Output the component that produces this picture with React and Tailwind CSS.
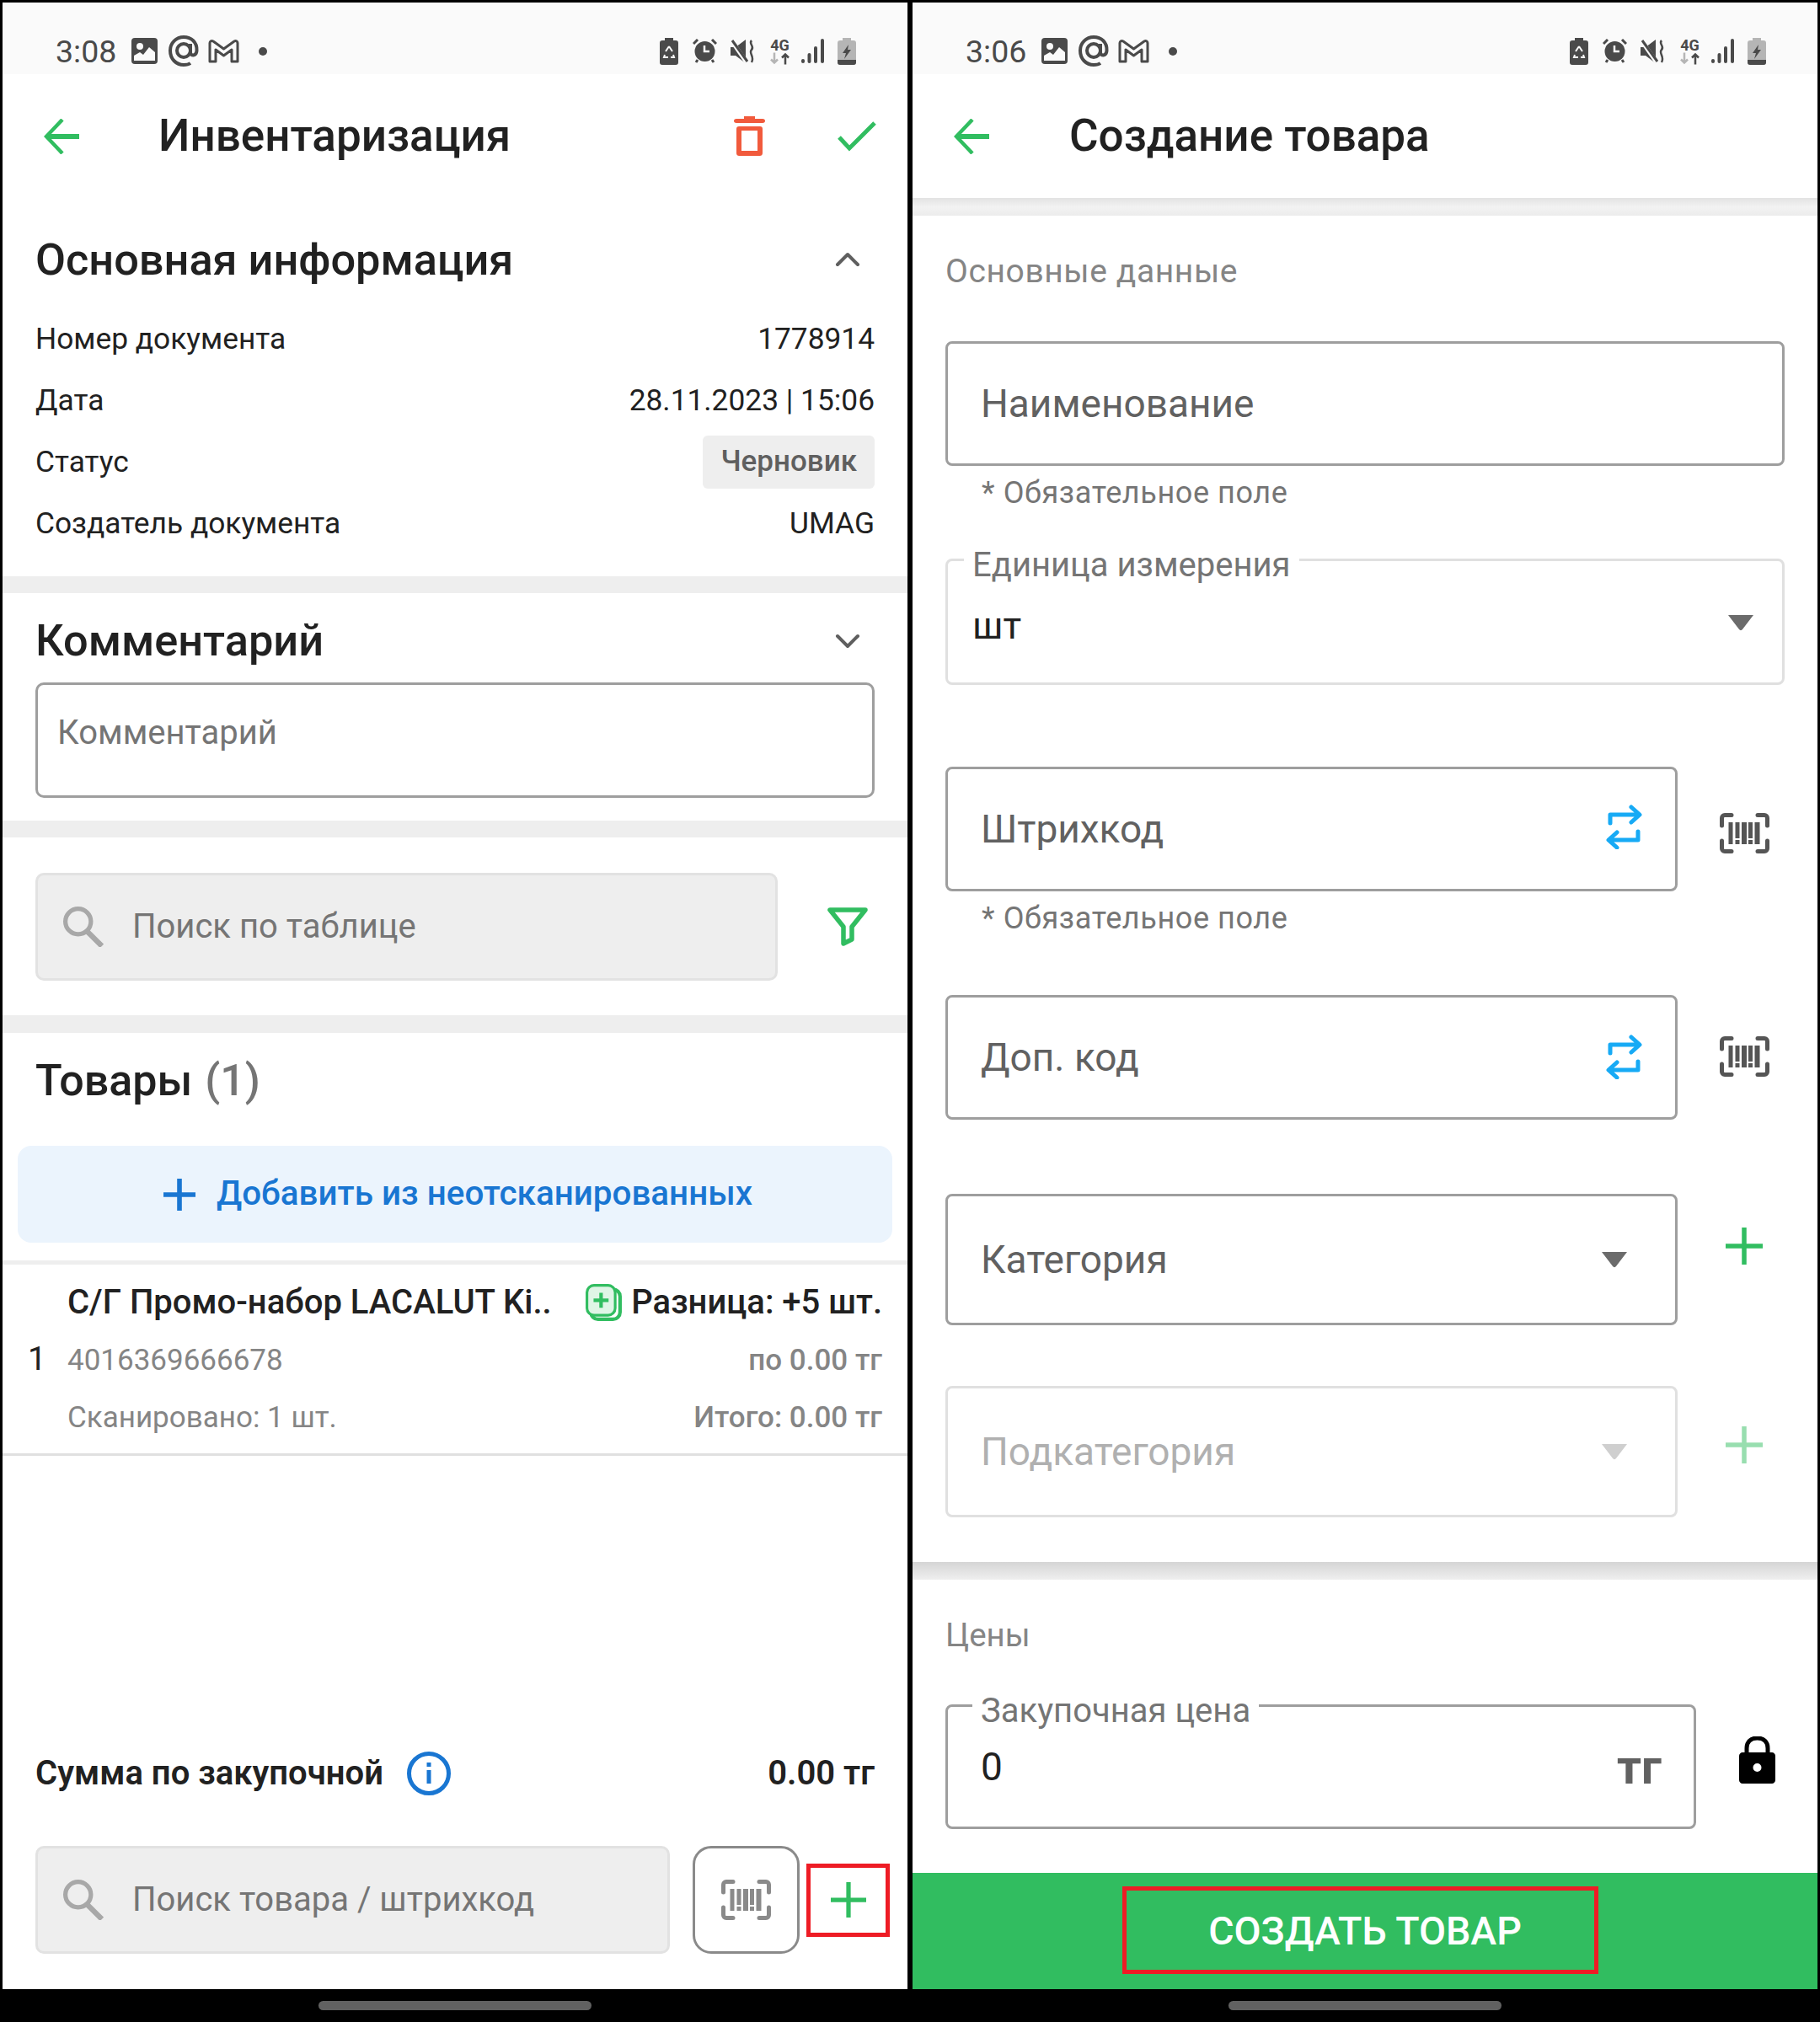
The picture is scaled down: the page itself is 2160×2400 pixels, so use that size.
import React from 'react'

const GREEN = '#31bd60'

function ImageIcon() {
  return (
    <svg width="31" height="31" viewBox="0 0 31 31">
      <rect x="0" y="0" width="31" height="31" rx="4" fill="#4a4a4a" />
      <circle cx="10" cy="10" r="4" fill="#fafafa" />
      <path d="M3 27V21L10 17L14 20L21 11L28 17V27Z" fill="#fafafa" />
    </svg>
  )
}

function AtIcon() {
  return (
    <svg width="36" height="38" viewBox="0 0 36 38" fill="none" stroke="#4a4a4a" strokeWidth="4">
      <circle cx="18" cy="18" r="8" />
      <path d="M26 10V20C26 25 33 25 33.5 18C34 8 27 2 18 2C9 2 2 9 2 18C2 28 9 35 18 35C21 35 24 34.500 26 33" />
    </svg>
  )
}

function MailIcon() {
  return (
    <svg width="37" height="28" viewBox="0 0 37 28" fill="none" stroke="#4a4a4a" strokeWidth="3" strokeLinejoin="round">
      <path d="M2 26V4C2 2 4 1 6 2L18.500 11L31 2C33 1 35 2 35 4V26H28V12L18.500 19L9 12V26Z" />
    </svg>
  )
}

function RecycleBattery() {
  return (
    <svg width="22" height="32" viewBox="0 0 22 32">
      <path d="M6 0H16V3H19C21 3 22 4 22 6V29C22 31 21 32 19 32H3C1 32 0 31 0 29V6C0 4 1 3 3 3H6Z" fill="#4a4a4a" />
      <path d="M11 10L7 16M11 10L15 16M6 20L5 23H10M16 20L17 23H13" stroke="#fafafa" strokeWidth="2" fill="none" />
    </svg>
  )
}

function AlarmIcon() {
  return (
    <svg width="29" height="29" viewBox="0 0 29 29">
      <circle cx="14.500" cy="15" r="12" fill="#4a4a4a" />
      <path d="M1 6L6 1M28 6L23 1M6 25L4 28M23 25L25 28" stroke="#4a4a4a" strokeWidth="3" />
      <path d="M14 8V15H20" stroke="#fafafa" strokeWidth="2.500" fill="none" />
    </svg>
  )
}

function MuteIcon() {
  return (
    <svg width="30" height="28" viewBox="0 0 30 28">
      <path d="M0 9H6L18 0V28L6 19H0Z" fill="#4a4a4a" />
      <path d="M1 1L19 27" stroke="#fafafa" strokeWidth="5" />
      <path d="M2 1L20 26" stroke="#4a4a4a" strokeWidth="3" />
      <path d="M25 1C21 5 29 8 25 12C21 16 29 20 25 27" stroke="#4a4a4a" strokeWidth="2.500" fill="none" />
    </svg>
  )
}

function NetIcon() {
  return (
    <div className="flex flex-col items-center w-[25px] h-[32px] leading-none">
      <span className="text-[18px] font-bold text-[#4a4a4a] leading-[17px]">4G</span>
      <svg width="25" height="15" viewBox="0 0 25 14" fill="none" strokeWidth="2.500">
        <path d="M6 0V12M2 8L6 12L10 8" stroke="#b5b5b5" />
        <path d="M19 14V2M15 6L19 2L23 6" stroke="#4a4a4a" />
      </svg>
    </div>
  )
}

function SignalIcon() {
  return (
    <svg width="27" height="29" viewBox="0 0 27 29">
      <rect x="0" y="24" width="4" height="5" rx="2" fill="#4a4a4a" />
      <rect x="7.500" y="17" width="4" height="12" rx="2" fill="#4a4a4a" />
      <rect x="15" y="9" width="4" height="20" rx="2" fill="#4a4a4a" />
      <rect x="23" y="0" width="4" height="29" rx="2" fill="#4a4a4a" />
    </svg>
  )
}

function ChargeBattery() {
  return (
    <svg width="22" height="32" viewBox="0 0 22 32">
      <path d="M6 0H16V3H19C21 3 22 4 22 6V29C22 31 21 32 19 32H3C1 32 0 31 0 29V6C0 4 1 3 3 3H6Z" fill="#b5b5b5" />
      <path d="M0 26H22V29C22 31 21 32 19 32H3C1 32 0 31 0 29Z" fill="#4a4a4a" />
      <path d="M13 8L6 18H10L8 25L16 14H12Z" fill="#4a4a4a" />
    </svg>
  )
}

function StatusBar({ time }) {
  return (
    <div className="h-[85px] bg-[#fafafa] flex items-center pl-[63px] pr-[61px] pt-[30px] shrink-0">
      <span className="text-[37.5px] font-normal pt-[2px] text-[#4a4a4a] w-[90px]">{time}</span>
      <ImageIcon />
      <div className="w-[13px]" />
      <AtIcon />
      <div className="w-[11px]" />
      <MailIcon />
      <div className="w-[23px]" />
      <div className="w-[10px] h-[10px] rounded-full bg-[#4a4a4a]" />
      <div className="flex-1" />
      <RecycleBattery />
      <div className="w-[17px]" />
      <AlarmIcon />
      <div className="w-[16px]" />
      <MuteIcon />
      <div className="w-[16px]" />
      <NetIcon />
      <div className="w-[13px]" />
      <SignalIcon />
      <div className="w-[16px]" />
      <ChargeBattery />
    </div>
  )
}

function BackArrow() {
  return (
    <svg width="42" height="42" viewBox="0 0 42 42" fill="none" stroke={GREEN} strokeWidth="4.500">
      <path d="M22 1L3 21L22 41" />
      <path d="M3 21H42" strokeWidth="6" />
    </svg>
  )
}

function TrashIcon() {
  return (
    <svg width="37" height="47" viewBox="0 0 37 47" fill="#f15a3c">
      <path d="M12 0H25V3H34C36 3 37 4 37 5.500C37 7 36 8 34 8H3C1 8 0 7 0 5.500C0 4 1 3 3 3H12Z" />
      <path fillRule="evenodd" d="M6 12H31C33 12 34 13 34 15V43C34 46 33 47 30 47H7C4 47 3 46 3 43V15C3 13 4 12 6 12ZM9 17V41H28V17Z" />
    </svg>
  )
}

function CheckIcon() {
  return (
    <svg width="46" height="36" viewBox="0 0 46 36" fill="none" stroke={GREEN} strokeWidth="5">
      <path d="M2 19L14 32L44 2" />
    </svg>
  )
}

function Chevron({ up }) {
  return (
    <svg width="30" height="18" viewBox="0 0 30 18" fill="none" stroke="#5f5f5f" strokeWidth="4" strokeLinecap="round" strokeLinejoin="round">
      <path d={up ? 'M3 15L15 3L27 15' : 'M3 3L15 15L27 3'} />
    </svg>
  )
}

function SearchIcon() {
  return (
    <svg width="48" height="48" viewBox="0 0 46 46" fill="none" stroke="#a8a8a8" strokeWidth="5">
      <circle cx="17" cy="17" r="14.500" />
      <path d="M27 28L44 45" strokeWidth="6" />
    </svg>
  )
}

function FilterIcon() {
  return (
    <svg width="48" height="46" viewBox="0 0 48 46" fill="none" stroke={GREEN} strokeWidth="5.500" strokeLinejoin="round">
      <path d="M3 3H45L29 23V38L19 43V23Z" />
    </svg>
  )
}

function BarcodeIcon({ color }) {
  return (
    <svg width="59" height="48" viewBox="0 0 59 48" fill="none">
      <path d="M2.500 15V6C2.500 4 4 2.500 6 2.500H14M45 2.500H53C55 2.500 56.500 4 56.500 6V15M2.500 33V42C2.500 44 4 45.500 6 45.500H14M45 45.500H53C55 45.500 56.500 44 56.500 42V33" stroke={color} strokeWidth="5" strokeLinecap="round" />
      <g fill={color}>
        <rect x="10.500" y="11" width="5" height="26" />
        <rect x="18.500" y="11" width="5" height="19" />
        <rect x="18.500" y="32" width="5" height="5" />
        <rect x="26" y="11" width="6" height="26" />
        <rect x="34" y="11" width="5" height="19" />
        <rect x="34" y="32" width="5" height="5" />
        <rect x="41.500" y="11" width="6" height="26" />
      </g>
    </svg>
  )
}

function SwapIcon() {
  return (
    <svg width="43" height="53" viewBox="0 0 43 53" fill="none" stroke="#17aaf5" strokeWidth="5" strokeLinecap="round" strokeLinejoin="round">
      <path d="M5 22V12H39M30 3L40 12L30 21" />
      <path d="M38 32V42H4M13 33L3 42L13 51" />
    </svg>
  )
}

function PlusIcon({ color, size = 44, weight = 5.5 }) {
  return (
    <svg width={size} height={size} viewBox="0 0 44 44" stroke={color} strokeWidth={weight}>
      <path d="M22 0V44" />
      <path d="M0 22H44" />
    </svg>
  )
}

function DiffIcon() {
  return (
    <svg width="43" height="44" viewBox="0 0 41 42" fill="none">
      <rect x="6" y="6" width="33" height="34" rx="8" stroke={GREEN} strokeWidth="4" />
      <rect x="1.500" y="1.500" width="32" height="34" rx="8" fill="#dff5e6" stroke={GREEN} strokeWidth="3" />
      <path d="M17.500 10V27M9 18.500H26" stroke={GREEN} strokeWidth="4" />
    </svg>
  )
}

function InfoIcon() {
  return (
    <svg width="52" height="52" viewBox="0 0 52 52" fill="none">
      <circle cx="26" cy="26" r="23.500" stroke="#1976d2" strokeWidth="5" />
      <rect x="23.500" y="22" width="5" height="16" fill="#1976d2" />
      <rect x="23.500" y="13" width="5" height="5" fill="#1976d2" />
    </svg>
  )
}

function LockIcon() {
  return (
    <svg width="43" height="56" viewBox="0 0 43 56">
      <path d="M9 20V14C9 6 14 2 21.500 2C29 2 34 6 34 14V20" fill="none" stroke="#000" strokeWidth="5" />
      <path fillRule="evenodd" d="M4 19H39C41 19 43 21 43 23V52C43 54 41 56 39 56H4C2 56 0 54 0 52V23C0 21 2 19 4 19ZM21.500 32A5 5 0 1 0 21.500 42A5 5 0 1 0 21.500 32Z" fill="#000" />
    </svg>
  )
}

function Caret({ light }) {
  return (
    <svg width="32" height="20" viewBox="0 0 32 20">
      <path d="M1 1H31L18 18C17 19.500 15 19.500 14 18Z" fill={light ? '#cfcfcf' : '#6b6b6b'} />
    </svg>
  )
}

function Divider({ className }) {
  return <div className={`bg-[#eeeeee] shrink-0 ${className}`} />
}

function InfoRow({ label, children }) {
  return (
    <div className="h-[73px] flex items-center justify-between text-[35.3px] text-[#212121]">
      <span>{label}</span>
      {children}
    </div>
  )
}

function InventoryScreen() {
  return (
    <div className="flex-1 bg-white flex flex-col">
      <StatusBar time="3:08" />

      <div className="h-[147px] flex items-center pl-[49px] pr-[37px] shrink-0">
        <BackArrow />
        <h1 className="ml-[94px] text-[53px] font-medium text-[#212121]">Инвентаризация</h1>
        <div className="ml-auto">
          <TrashIcon />
        </div>
        <div className="ml-[86px]">
          <CheckIcon />
        </div>
      </div>

      <div className="px-[39px] shrink-0">
        <div className="mt-[23px] mb-[8px] h-[100px] flex items-center justify-between">
          <h2 className="text-[52.3px] font-medium text-[#212121]">Основная информация</h2>
          <div className="mr-[17px]">
            <Chevron up />
          </div>
        </div>
        <InfoRow label="Номер документа"><span>1778914</span></InfoRow>
        <InfoRow label="Дата"><span>28.11.2023 | 15:06</span></InfoRow>
        <InfoRow label="Статус">
          <span className="h-[63px] px-[21px] flex items-center rounded-[6px] bg-[#eeeeee] font-medium text-[35px] text-[#5f5f5f]">Черновик</span>
        </InfoRow>
        <InfoRow label="Создатель документа"><span>UMAG</span></InfoRow>
      </div>
      <Divider className="h-[20px] mt-[26px]" />

      <div className="px-[39px] shrink-0">
        <div className="mt-[7px] h-[99px] flex items-center justify-between">
          <h2 className="text-[52.3px] font-medium text-[#212121]">Комментарий</h2>
          <div className="mr-[17px]">
            <Chevron />
          </div>
        </div>
        <div className="h-[137px] border-[3px] border-[#9e9e9e] rounded-[10px] pl-[23px] pt-[32px] text-[40px] text-[#757575] leading-[50px]">
          Комментарий
        </div>
      </div>
      <Divider className="h-[20px] mt-[27px]" />

      <div className="mt-[42px] pl-[39px] flex items-center h-[128px] shrink-0">
        <div className="w-[881px] h-[128px] bg-[#eeeeee] border-[3px] border-[#e2e2e2] rounded-[10px] flex items-center pl-[30px] text-[40px] text-[#757575]">
          <SearchIcon />
          <span className="ml-[34px]">Поиск по таблице</span>
        </div>
        <div className="ml-[59px]">
          <FilterIcon />
        </div>
      </div>
      <Divider className="h-[21px] mt-[41px]" />

      <div className="h-[114px] pl-[39px] flex items-center text-[52px] font-medium text-[#212121] shrink-0">
        Товары
        <span className="ml-[15px] text-[#757575]">(1)</span>
      </div>
      <div className="mt-[20px] mx-[18px] h-[115px] pl-[7px] rounded-[16px] bg-[#ebf4fd] flex items-center justify-center text-[#1976d2] text-[40.4px] font-medium shrink-0">
        <PlusIcon color="#1976d2" size={38} weight={6.5} />
        <span className="ml-[25px]">Добавить из неотсканированных</span>
      </div>
      <Divider className="h-[5px] mt-[21px]" />

      <div className="h-[227px] pt-[9px] border-b-[3px] border-[#e0e0e0] flex shrink-0">
        <div className="w-[77px] pl-[30px] pt-[72px] text-[39px] text-[#212121] leading-[62px]">1</div>
        <div className="flex-1 pr-[30px]">
          <div className="h-[70px] pt-[2px] flex items-center text-[40px] font-medium text-[#212121]">
            <span className="w-[615px] whitespace-nowrap">С/Г Промо-набор LACALUT Ki..</span>
            <DiffIcon />
            <span className="ml-auto">Разница: +5 шт.</span>
          </div>
          <div className="h-[71px] flex items-center justify-between text-[35px] text-[#858585]">
            <span>4016369666678</span>
            <span className="font-medium">по 0.00 тг</span>
          </div>
          <div className="h-[65px] flex items-center justify-between text-[35px] text-[#858585]">
            <span>Сканировано: 1 шт.</span>
            <span className="font-medium">Итого: 0.00 тг</span>
          </div>
        </div>
      </div>

      <div className="flex-1" />

      <div className="h-[100px] px-[39px] pt-[3px] flex items-center text-[40px] font-semibold text-[#212121] shrink-0">
        <span>Сумма по закупочной</span>
        <div className="ml-[28px]">
          <InfoIcon />
        </div>
        <span className="ml-auto">0.00 тг</span>
      </div>
      <div className="mt-[38px] mb-[42px] h-[128px] pl-[39px] flex items-center shrink-0">
        <div className="w-[753px] h-[128px] bg-[#eeeeee] border-[3px] border-[#e2e2e2] rounded-[10px] flex items-center pl-[30px] text-[40px] text-[#757575]">
          <SearchIcon />
          <span className="ml-[34px]">Поиск товара / штрихкод</span>
        </div>
        <div className="ml-[27px] w-[127px] h-[128px] border-[3px] border-[#8a8a8a] rounded-[22px] flex items-center justify-center">
          <BarcodeIcon color="#8a8a8a" />
        </div>
        <div className="ml-[8px] w-[99px] h-[87px] border-[5px] border-[#ee1c25] flex items-center justify-center">
          <PlusIcon color={GREEN} size={42} />
        </div>
      </div>
    </div>
  )
}

function Field({ label, className, light, legend, legendClass, children }) {
  return (
    <div className={`relative border-[3px] rounded-[8px] flex items-center ${light ? 'border-[#e0e0e0]' : 'border-[#9e9e9e]'} ${className}`}>
      {legend && (
        <span className={`absolute top-[-14px] px-[10px] bg-white text-[40px] leading-[38px] text-[#757575] ${legendClass}`}>{legend}</span>
      )}
      {label && (
        <span className={`ml-[39px] text-[46px] ${light ? 'text-[#b0b0b0]' : 'text-[#616161]'}`}>{label}</span>
      )}
      {children}
    </div>
  )
}

function Helper() {
  return <div className="mt-[11px] h-[40px] pt-[1px] pl-[43px] flex items-center text-[36px] tracking-[0.6px] text-[#757575]">* Обязательное поле</div>
}

function CreateScreen() {
  return (
    <div className="flex-1 bg-white flex flex-col">
      <StatusBar time="3:06" />

      <div className="h-[147px] flex items-center pl-[49px] shrink-0">
        <BackArrow />
        <h1 className="ml-[95px] text-[53px] font-medium text-[#212121]">Создание товара</h1>
      </div>
      <div className="h-[21px] shrink-0 bg-gradient-to-b from-[#e2e2e2] via-[#f2f2f2] to-[#ececec]" />

      <div className="pl-[39px] shrink-0">
        <div className="mt-[36px] h-[60px] flex items-center text-[39px] tracking-[0.6px] text-[#858585]">Основные данные</div>

        <Field label="Наименование" className="mt-[53px] w-[996px] h-[148px]" />
        <Helper />

        <Field className="mt-[59px] w-[996px] h-[150px]" light legend="Единица измерения" legendClass="left-[19px]">
          <span className="ml-[29px] mt-[9px] text-[45px] text-[#212121]">шт</span>
          <div className="ml-auto mr-[33px] mt-[2px]">
            <Caret />
          </div>
        </Field>

        <div className="mt-[97px] flex items-center">
          <Field label="Штрихкод" className="w-[869px] h-[148px]">
            <div className="ml-auto mr-[39px] mb-[6px]">
              <SwapIcon />
            </div>
          </Field>
          <div className="ml-[50px] mt-[10px]">
            <BarcodeIcon color="#555555" />
          </div>
        </div>
        <Helper />

        <div className="mt-[72px] flex items-center">
          <Field label="Доп. код" className="w-[869px] h-[148px]">
            <div className="ml-auto mr-[39px] mb-[2px]">
              <SwapIcon />
            </div>
          </Field>
          <div className="ml-[50px] mb-[2px]">
            <BarcodeIcon color="#555555" />
          </div>
        </div>

        <div className="mt-[88px] flex items-center">
          <Field label="Категория" className="w-[869px] h-[156px]">
            <div className="ml-auto mr-[56px]">
              <Caret />
            </div>
          </Field>
          <div className="ml-[57px] mb-[32px]">
            <PlusIcon color={GREEN} />
          </div>
        </div>

        <div className="mt-[72px] flex items-center">
          <Field label="Подкатегория" className="w-[869px] h-[156px]" light>
            <div className="ml-auto mr-[56px]">
              <Caret light />
            </div>
          </Field>
          <div className="ml-[57px] mb-[16px]">
            <PlusIcon color="#98deaf" />
          </div>
        </div>
      </div>

      <div className="h-[21px] mt-[53px] shrink-0 bg-gradient-to-b from-[#d5d5d5] to-[#efefef]" />

      <div className="pl-[39px] shrink-0">
        <div className="mt-[36px] h-[60px] flex items-center text-[38.5px] text-[#858585]">Цены</div>
        <div className="mt-[52px] flex items-center">
          <Field className="w-[891px] h-[148px]" legend="Закупочная цена" legendClass="left-[29px]">
            <span className="ml-[39px] mt-[1px] text-[46px] text-[#212121]">0</span>
            <span className="ml-auto mr-[38px] mt-[1px] text-[57px] font-bold text-[#616161]">тг</span>
          </Field>
          <div className="ml-[51px] mb-[16px]">
            <LockIcon />
          </div>
        </div>
      </div>

      <div className="flex-1" />

      <div className="h-[138px] bg-[#31bd60] flex items-center justify-center shrink-0">
        <div className="w-[565px] h-[104px] mb-[3px] mr-[11px] pt-[5px] pl-[11px] border-[5px] border-[#ee1c25] flex items-center justify-center text-[46.5px] font-medium text-white">
          СОЗДАТЬ ТОВАР
        </div>
      </div>
    </div>
  )
}

function Phone({ children }) {
  return (
    <div className="w-[1074px] h-[2397px] flex flex-col">
      <div className="h-[2358px] flex flex-col">{children}</div>
      <div className="mt-[14px] mx-auto w-[324px] h-[11px] rounded-full bg-[#616161]" />
    </div>
  )
}

export default function App() {
  return (
    <div className="w-[2160px] h-[2400px] bg-black pt-[3px] px-[3px] flex gap-[6px] font-['Roboto',sans-serif] overflow-hidden">
      <Phone><InventoryScreen /></Phone>
      <Phone><CreateScreen /></Phone>
    </div>
  )
}
